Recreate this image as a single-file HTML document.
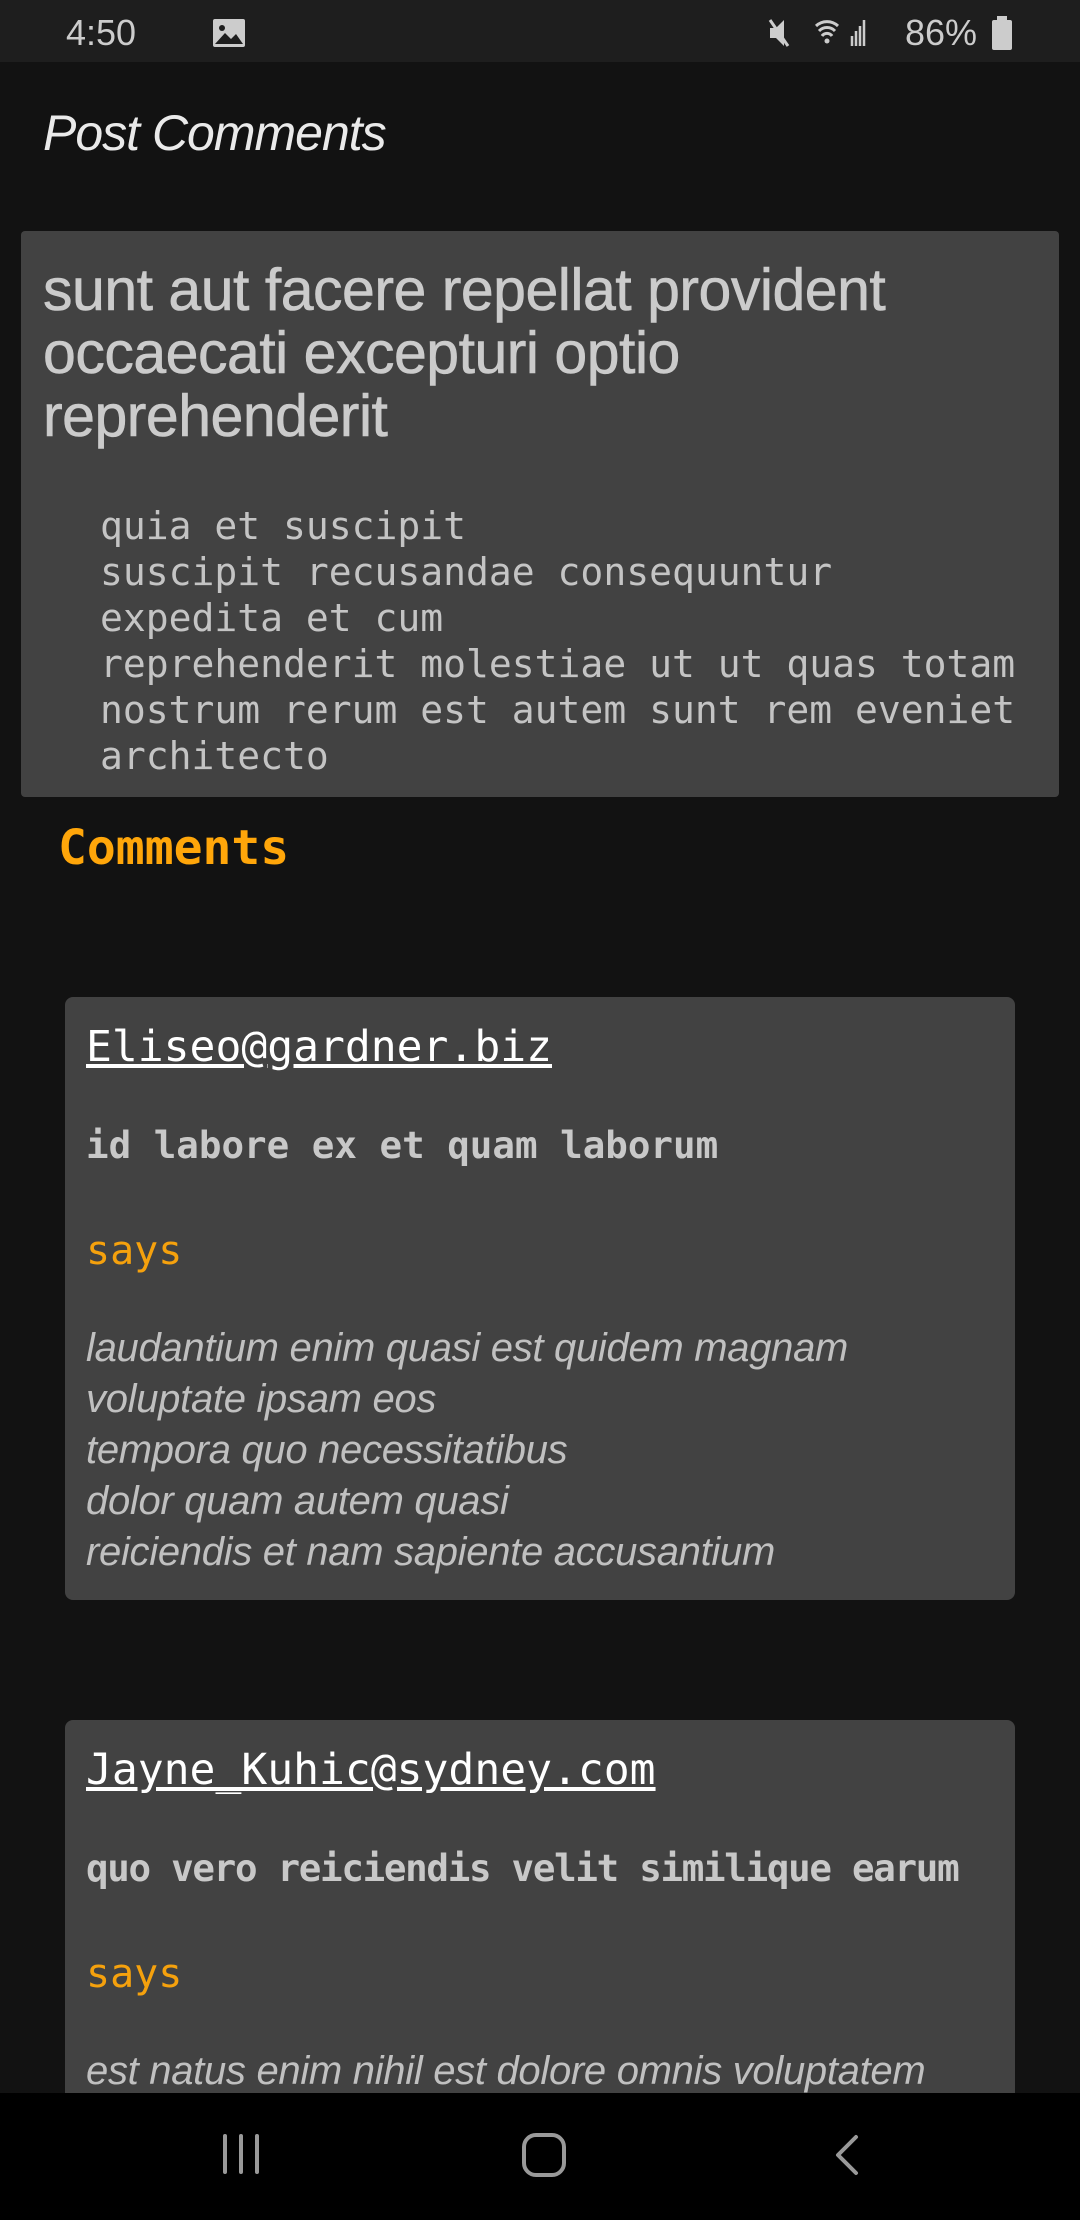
<!DOCTYPE html>
<html style="width:1080px;height:2220px;overflow:hidden"><head><meta charset="utf-8"><style>
*{margin:0;padding:0;box-sizing:border-box}
body{width:1080px;height:2220px;background:#121212;position:relative;overflow:hidden;font-family:"Liberation Sans",sans-serif;color:#c8c8c8}
.abs{position:absolute;white-space:nowrap}
.status{position:absolute;left:0;top:0;width:1080px;height:62px;background:#1e1e1e}
.card{position:absolute;background:#424242;border-radius:8px;overflow:hidden}
.mono{font-family:"DejaVu Sans Mono","Liberation Mono",monospace}
.nav{position:absolute;left:0;top:2093px;width:1080px;height:127px;background:#000}
</style></head><body>
<div class="status">
 <div class="abs" style="left:66px;top:12px;font-size:36px;color:#ccc">4:50</div>
 <svg class="abs" style="left:212px;top:18px" width="34" height="30" viewBox="0 0 34 30"><rect x="1" y="1" width="32" height="28" rx="2" fill="#ccc"/><circle cx="10" cy="10" r="3" fill="#1e1e1e"/><path d="M3 26 L13 15 L19 21 L24 16 L31 26Z" fill="#1e1e1e"/></svg>
 <svg class="abs" style="left:768px;top:16px" width="100" height="34" viewBox="0 0 100 34"><path d="M2 12h6l8-8v26l-8-8H2z" fill="#ccc"/><path d="M2 4l18 26" stroke="#ccc" stroke-width="3"/><path d="M48 10a16 16 0 0 1 22 0M51 15a11 11 0 0 1 16 0M54 20a6 6 0 0 1 10 0" stroke="#ccc" stroke-width="3" fill="none"/><circle cx="59" cy="25" r="2.5" fill="#ccc"/><path d="M84 30V20M88 30V15M92 30V10M96 30V4" stroke="#ccc" stroke-width="2.5"/></svg>
 <div class="abs" style="left:905px;top:12px;font-size:36px;color:#ccc">86%</div>
 <svg class="abs" style="left:991px;top:16px" width="22" height="34" viewBox="0 0 22 34"><rect x="6" y="0" width="10" height="4" fill="#ccc"/><rect x="1" y="4" width="20" height="30" rx="2" fill="#ccc"/></svg>
</div>
<div class="abs" style="left:43px;top:104px;font-size:50px;font-style:italic;color:#eaeaea;letter-spacing:-1px">Post Comments</div>
<div class="card" style="left:21px;top:231px;width:1038px;height:566px;border-radius:4px">
 <div class="abs" style="left:22px;top:28px;font-size:59px;line-height:63px;color:#cbcbcb;letter-spacing:-0.5px;white-space:normal;width:960px;-webkit-text-stroke:0.6px #cbcbcb">sunt aut facere repellat provident occaecati excepturi optio reprehenderit</div>
 <div class="abs mono" style="left:79px;top:272px;font-size:38px;line-height:46px;color:#c4c4c4">quia et suscipit<br>suscipit recusandae consequuntur<br>expedita et cum<br>reprehenderit molestiae ut ut quas totam<br>nostrum rerum est autem sunt rem eveniet<br>architecto</div>
</div>
<div class="abs mono" style="left:58px;top:820px;font-size:48px;font-weight:bold;color:#ffa60a">Comments</div>

<div class="card" style="left:65px;top:997px;width:950px;height:603px">
 <div class="abs mono" style="left:21px;top:25px;font-size:43px;color:#fff;text-decoration:underline">Eliseo@gardner.biz</div>
 <div class="abs mono" style="left:21px;top:126px;font-size:37.5px;font-weight:bold;color:#c8c8c8">id labore ex et quam laborum</div>
 <div class="abs mono" style="left:21px;top:231px;font-size:40px;color:#f5a10d">says</div>
 <div class="abs" style="left:21px;top:326px;font-size:40px;line-height:51px;font-style:italic;color:#c0c0c0;letter-spacing:-0.3px">laudantium enim quasi est quidem magnam<br>voluptate ipsam eos<br>tempora quo necessitatibus<br>dolor quam autem quasi<br>reiciendis et nam sapiente accusantium</div>
</div>
<div class="card" style="left:65px;top:1720px;width:950px;height:373px;border-radius:8px 8px 0 0">
 <div class="abs mono" style="left:21px;top:25px;font-size:43px;color:#fff;text-decoration:underline">Jayne_Kuhic@sydney.com</div>
 <div class="abs mono" style="left:21px;top:126px;font-size:37.5px;font-weight:bold;color:#c8c8c8;letter-spacing:-1.3px">quo vero reiciendis velit similique earum</div>
 <div class="abs mono" style="left:21px;top:231px;font-size:40px;color:#f5a10d">says</div>
 <div class="abs" style="left:21px;top:326px;font-size:40px;line-height:51px;font-style:italic;color:#c0c0c0;letter-spacing:-0.3px">est natus enim nihil est dolore omnis voluptatem</div>
</div>
<div class="nav">
 <svg class="abs" style="left:220px;top:40px" width="44" height="44" viewBox="0 0 44 44"><path d="M5 3v36M21 3v36M37 3v36" stroke="#999" stroke-width="4" stroke-linecap="round"/></svg>
 <svg class="abs" style="left:521px;top:39px" width="46" height="46" viewBox="0 0 46 46"><rect x="3" y="3" width="40" height="40" rx="12" fill="none" stroke="#999" stroke-width="4"/></svg>
 <svg class="abs" style="left:832px;top:41px" width="30" height="42" viewBox="0 0 30 42"><path d="M24 3L6 21l18 18" fill="none" stroke="#999" stroke-width="4" stroke-linecap="round" stroke-linejoin="round"/></svg>
</div>
</body></html>
